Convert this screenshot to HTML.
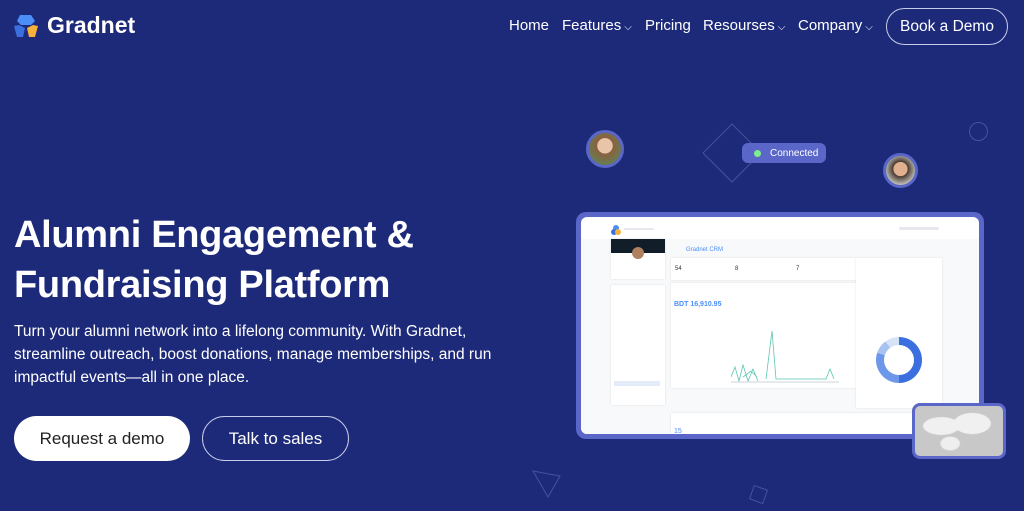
<!DOCTYPE html>
<html><head><meta charset="utf-8"><style>
*{margin:0;padding:0;box-sizing:border-box}
body{width:1024px;height:511px;overflow:hidden;background:#1d2a7a;font-family:"Liberation Sans",sans-serif;color:#fff;position:relative}
.abs{position:absolute}
.nav a{position:absolute;top:17px;font-size:15px;color:#fff;white-space:nowrap}
.chev{font-size:10px;margin-left:3px}
h1{position:absolute;left:14px;top:210px;font-size:38px;line-height:50px;font-weight:bold;letter-spacing:-0.3px}
p.sub{position:absolute;left:14px;top:320px;font-size:15.5px;line-height:23px;width:490px}
.btn{position:absolute;top:416px;height:45px;border-radius:23px;font-size:17px;display:flex;align-items:center;justify-content:center}
.t{background:#e6e8ee;border-radius:2px;position:absolute}
.card{position:absolute;background:#fff;box-shadow:0 0 2px rgba(0,0,0,.12)}
</style></head><body>
<svg class="abs" style="left:13px;top:14px" width="26" height="24" viewBox="0 0 26 24">
<path d="M7 1h11l4 6-4 4H8L4 7z" fill="#4b8ef7"/>
<path d="M1 12l5-1 6 3-2 9H4z" fill="#3b6fe0"/>
<path d="M14 14l6-3 5 1-3 11h-6z" fill="#f5b13b"/>
</svg>
<div class="abs" style="left:47px;top:12px;font-size:23px;font-weight:bold">Gradnet</div>
<div class="nav">
<a style="left:509px">Home</a>
<a style="left:562px">Features<span class="chev">⌵</span></a>
<a style="left:645px">Pricing</a>
<a style="left:703px">Resourses<span class="chev">⌵</span></a>
<a style="left:798px">Company<span class="chev">⌵</span></a>
</div>
<div class="abs" style="left:886px;top:8px;width:122px;height:37px;border:1px solid #c8cde8;border-radius:19px;display:flex;align-items:center;justify-content:center;font-size:15.5px">Book a Demo</div>

<h1>Alumni Engagement &amp;<br>Fundraising Platform</h1>
<p class="sub">Turn your alumni network into a lifelong community. With Gradnet, streamline outreach, boost donations, manage memberships, and run impactful events—all in one place.</p>
<div class="btn" style="left:14px;width:176px;background:#fff;color:#222">Request a demo</div>
<div class="btn" style="left:202px;width:147px;border:1px solid #c8cde8;color:#fff">Talk to sales</div>

<div class="abs" style="left:711px;top:132px;width:42px;height:42px;border:1px solid #4452a0;transform:rotate(45deg)"></div>
<div class="abs" style="left:969px;top:122px;width:19px;height:19px;border:1px solid #4452a0;border-radius:50%"></div>
<svg class="abs" style="left:530px;top:468px" width="34" height="32"><path d="M3 3L30 8 18 29z" fill="none" stroke="#4452a0"/></svg>
<div class="abs" style="left:751px;top:487px;width:15px;height:15px;border:1px solid #4452a0;transform:rotate(20deg)"></div>
<div class="abs" style="left:742px;top:143px;width:84px;height:20px;background:#5a66c8;border-radius:6px;font-size:10px;display:flex;align-items:center;padding-left:12px"><span style="width:7px;height:7px;background:#7ef08a;border-radius:50%;margin-right:9px"></span>Connected</div>
<div class="abs" style="left:586px;top:130px;width:38px;height:38px;border-radius:50%;border:3px solid #5a66c8;background:radial-gradient(circle at 50% 40%,#e8c4a8 0 30%,#8a6040 32%,#6a7a50 70%)"></div>
<div class="abs" style="left:883px;top:153px;width:35px;height:35px;border-radius:50%;border:3px solid #5a66c8;background:radial-gradient(circle at 50% 45%,#e0b090 0 32%,#4a3a30 34%,#b8b8b0 70%)"></div>

<div class="abs" style="left:576px;top:212px;width:408px;height:227px;background:#5a66c8;border-radius:10px;padding:5px">
<div style="position:relative;width:100%;height:100%;background:#fff;border-radius:6px;overflow:hidden">
<svg style="position:absolute;left:30px;top:8px" width="10" height="10"><circle cx="5" cy="3" r="3" fill="#4b8ef7"/><circle cx="3" cy="7" r="3" fill="#3b6fe0"/><circle cx="7" cy="7" r="3" fill="#f5b13b"/></svg>
<div class="t" style="left:43px;top:11px;width:30px;height:2px"></div>
<div class="t" style="left:318px;top:10px;width:40px;height:3px"></div>
<div style="position:absolute;left:0;top:22px;width:100%;height:210px;background:#f8f9fb"></div>
<div class="card" style="left:30px;top:22px;width:54px;height:40px"><div style="height:14px;background:#111d28"></div><div style="width:12px;height:12px;border-radius:50%;background:#b08060;margin:-6px auto 0"></div></div>
<div class="card" style="left:30px;top:68px;width:54px;height:120px"><div style="position:absolute;left:3px;top:96px;width:46px;height:5px;background:#e4ecfa"></div></div>
<div style="position:absolute;left:90px;top:22px;width:180px;height:16px;font-size:6px;color:#4b8ef7;padding:8px 0 0 15px">Gradnet CRM</div>
<div class="card" style="left:90px;top:41px;width:185px;height:22px"></div>
<div style="position:absolute;left:91px;top:49px;font-size:6px;color:#333;width:185px"><span style="position:absolute;left:3px">54</span><span style="position:absolute;left:63px">8</span><span style="position:absolute;left:124px">7</span></div>
<div class="card" style="left:90px;top:66px;width:185px;height:105px"></div>
<div style="position:absolute;left:93px;top:84px;font-size:7px;color:#4b8ef7;font-weight:bold">BDT 16,910.95</div>
<svg style="position:absolute;left:150px;top:100px" width="110" height="68"><path d="M0 60l4-10 4 14 4-16 5 16 5-12 5 12 M12 60l8-6 6 6 M35 62l6-48 4 48 50 0 4-10 4 10" fill="none" stroke="#5ac8b0" stroke-width="0.8"/><path d="M0 65h108" stroke="#9ab" stroke-width="0.5"/></svg>
<div class="card" style="left:275px;top:41px;width:86px;height:150px"></div>
<div style="position:absolute;left:295px;top:120px;width:46px;height:46px;border-radius:50%;background:conic-gradient(#3b6fe0 0 50%,#6d98ea 50% 80%,#a8c2f2 80% 90%,#d6e2f8 90%)"><div style="width:30px;height:30px;margin:8px;border-radius:50%;background:#fff"></div></div>
<div class="card" style="left:90px;top:196px;width:270px;height:30px;font-size:7px;color:#4b8ef7;padding:15px 0 0 3px">15</div>
</div></div>
<div class="abs" style="left:912px;top:403px;width:94px;height:56px;background:#5a66c8;border-radius:8px;padding:3px"><div style="width:100%;height:100%;background:#c8c8c8;border-radius:5px;background-image:radial-gradient(ellipse at 30% 40%,#f0f0f0 0 20%,transparent 22%),radial-gradient(ellipse at 65% 35%,#f0f0f0 0 22%,transparent 24%),radial-gradient(ellipse at 40% 75%,#eee 0 12%,transparent 14%)"></div></div>
</body></html>
